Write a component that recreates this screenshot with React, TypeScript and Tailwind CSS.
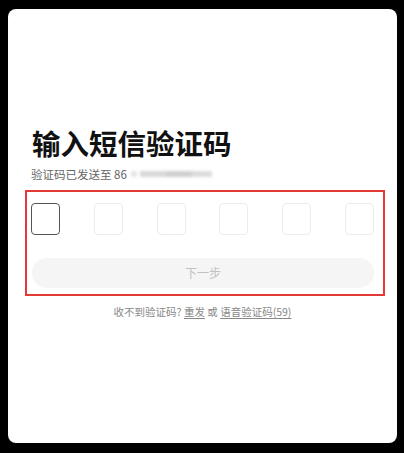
import React from "react";

export default function App() {
  const boxes = [0, 1, 2, 3, 4, 5];
  return (
    <div className="w-[404px] h-[453px] bg-black pt-[9px] pl-[8px]" style={{ fontFamily: '"Noto Sans CJK SC", "Noto Sans", sans-serif' }}>
      <div className="w-[389px] h-[434px] bg-white rounded-[8px] flex flex-col">
        <div className="mt-[116px] pl-[24px] text-[28.5px] leading-[36px] font-bold text-[#111]">输入短信验证码</div>
        <div className="mt-[5px] pl-[23px] flex items-center h-[16px]">
          <span className="text-[11.5px] leading-[16px] text-[#666]">验证码已发送至 86</span>
          <div className="ml-[4px] flex items-center blur-[1.5px]">
            <div className="w-[6px] h-[6px] bg-[#e2e2e2] rounded-[3px]"></div>
            <div className="ml-[3px] w-[26px] h-[6px] bg-[#d8d8d8]"></div>
            <div className="w-[26px] h-[6px] bg-[#cfcfcf]"></div>
            <div className="w-[20px] h-[6px] bg-[#dcdcdc]"></div>
          </div>
        </div>
        <div className="mt-[8px] ml-[17px] w-[360px] h-[106px] border-2 border-[#e53935] pl-[4px] pr-[9px] pt-[11px]">
          <div className="flex justify-between">
            {boxes.map((i) => (
              <div
                key={i}
                className={
                  i === 0
                    ? "w-[29px] h-[32px] rounded-[4px] border-[1.5px] border-[#555]"
                    : "w-[29px] h-[32px] rounded-[4px] border border-[#ececec]"
                }
              ></div>
            ))}
          </div>
          <div className="mt-[23px] ml-[1px] h-[30px] rounded-full bg-[#f5f5f5] flex items-center justify-center text-[12px] text-[#c2c2c2]">
            下一步
          </div>
        </div>
        <div className="mt-[8px] flex justify-center text-[10.5px] leading-[16px] text-[#888]">
          <span>收不到验证码?&nbsp;</span>
          <span className="underline underline-offset-2">重发</span>
          <span>&nbsp;或&nbsp;</span>
          <span className="underline underline-offset-2">语音验证码(59)</span>
        </div>
      </div>
    </div>
  );
}
